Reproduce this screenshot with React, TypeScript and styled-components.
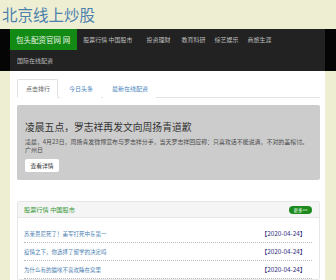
import styled, { createGlobalStyle } from 'styled-components';

const GlobalStyle = createGlobalStyle`
  html, body {
    margin: 0;
    padding: 0;
    background: #eeeed3;
    font-family: "Noto Sans CJK SC", "Noto Sans", sans-serif;
  }
  ul { margin: 0; padding: 0; list-style: none; }
`;

const Page = styled.div`
  width: 336px;
  height: 280px;
  overflow: hidden;
`;

const SiteTitle = styled.h1`
  margin: 0;
  height: 29px;
  padding-left: 2px;
  font-size: 15.5px;
  line-height: 28px;
  font-weight: 400;
  color: #4b80ad;
`;

const Nav = styled.nav`
  background: #050505;
`;

const NavInner = styled.div`
  margin: 0 11px 0 10px;
  background: #222;
`;

const NavRow = styled.div`
  display: flex;
  align-items: center;
  height: 21px;
`;

const Brand = styled.a`
  display: flex;
  align-items: center;
  height: 21px;
  padding: 0 7px 0 6px;
  background: #138a13;
  color: #e8f5e8;
  font-size: 7.5px;
  white-space: nowrap;
`;

const NavLink = styled.a<{ $gap?: number }>`
  margin-left: ${({ $gap }) => $gap ?? 12}px;
  color: #bdbdbd;
  font-size: 6px;
  white-space: nowrap;
`;

const Main = styled.main`
  margin: 0 11px 0 10px;
  padding: 8px 5px 0 7px;
  background: #fff;
  height: 209px;
`;

const Tabs = styled.ul`
  display: flex;
  height: 18px;
  border-bottom: 1px solid #e4e4e4;
`;

const Tab = styled.li<{ $active?: boolean }>`
  display: flex;
  align-items: center;
  padding: 0 7px 0 8px;
  margin-right: 2px;
  margin-bottom: -1px;
  font-size: 6px;
  color: ${({ $active }) => ($active ? '#666' : '#4a86c0')};
  background: #fff;
  border: 1px solid ${({ $active }) => ($active ? '#e2e2e2' : 'transparent')};
  border-bottom-color: ${({ $active }) => ($active ? '#fff' : 'transparent')};
  border-radius: 2px 2px 0 0;
`;

const Jumbotron = styled.section`
  margin-top: 7px;
  height: 75px;
  box-sizing: border-box;
  padding: 15px 8px 0 8px;
  background: #cccccc;
  border-radius: 2px;
`;

const Headline = styled.h2`
  margin: 0;
  font-size: 9.8px;
  line-height: 14px;
  font-weight: 400;
  color: #333;
`;

const Lead = styled.p`
  margin: 4px 0 0;
  font-size: 5.95px;
  line-height: 8px;
  color: #4a4a4a;
`;

const LeadLine = styled.span`
  display: block;
  white-space: nowrap;
`;

const DetailButton = styled.a`
  display: flex;
  align-items: center;
  justify-content: center;
  margin-top: 5px;
  width: 34px;
  height: 13px;
  background: #fff;
  border-radius: 2px;
  font-size: 5.8px;
  color: #333;
`;

const Panel = styled.section`
  margin-top: 21px;
  border: 1px solid #e6e6e6;
  border-radius: 2px;
`;

const PanelHead = styled.div`
  display: flex;
  align-items: center;
  justify-content: space-between;
  height: 15px;
  padding: 0 7px 0 6px;
  background: #f5f5f5;
  border-bottom: 1px solid #e6e6e6;
`;

const PanelTitle = styled.span`
  font-size: 6.2px;
  color: #3a9a3a;
`;

const More = styled.a`
  display: inline-flex;
  align-items: center;
  justify-content: center;
  width: 23px;
  height: 8px;
  border-radius: 4px;
  background: #1d8a1d;
  color: #eaffea;
  font-size: 4.5px;
`;

const List = styled.ul`
  padding: 7px 7px 0 6px;
`;

const Item = styled.li`
  display: flex;
  align-items: center;
  justify-content: space-between;
  height: 17px;
  border-bottom: 1px dotted #bbb;
  font-size: 5.5px;
`;

const ItemTitle = styled.a`
  color: #4a7db0;
`;

const ItemDate = styled.span`
  color: #2b2b7a;
  font-size: 6.3px;
  margin-right: 6px;
`;

const navLinks = [
  { label: '股票行情 中国股市', gap: 6 },
  { label: '投资理财', gap: 14 },
  { label: '教育科研', gap: 11 },
  { label: '综艺娱乐', gap: 9 },
  { label: '商旅生涯', gap: 9 },
];

const news = [
  '苏莱曼尼死了！美军打死中东第一',
  '疫情之下，你选择了留学的决定吗',
  '为什么有的猫咪不喜欢睡在窝里',
];

export default function App() {
  return (
    <Page>
      <GlobalStyle />
      <SiteTitle>北京线上炒股</SiteTitle>
      <Nav>
        <NavInner>
          <NavRow>
            <Brand>包头配资官网 网</Brand>
            {navLinks.map((l) => (
              <NavLink key={l.label} $gap={l.gap}>
                {l.label}
              </NavLink>
            ))}
          </NavRow>
          <NavRow>
            <NavLink $gap={7}>国际在线配资</NavLink>
          </NavRow>
        </NavInner>
      </Nav>
      <Main>
        <Tabs>
          <Tab $active>点击排行</Tab>
          <Tab>今日头条</Tab>
          <Tab>最新在线配资</Tab>
        </Tabs>
        <Jumbotron>
          <Headline>凌晨五点，罗志祥再发文向周扬青道歉</Headline>
          <Lead>
            <LeadLine>
              凌晨，4月23日，周扬青发微博宣布与罗志祥分手，当天罗志祥回应称：只喜欢话不能说满，不对的盖棺讨。
            </LeadLine>
            <LeadLine>广州日</LeadLine>
          </Lead>
          <DetailButton>查看详情</DetailButton>
        </Jumbotron>
        <Panel>
          <PanelHead>
            <PanelTitle>股票行情 中国股市</PanelTitle>
            <More>更多&gt;&gt;</More>
          </PanelHead>
          <List>
            {news.map((n) => (
              <Item key={n}>
                <ItemTitle>{n}</ItemTitle>
                <ItemDate>【2020-04-24】</ItemDate>
              </Item>
            ))}
          </List>
        </Panel>
      </Main>
    </Page>
  );
}
